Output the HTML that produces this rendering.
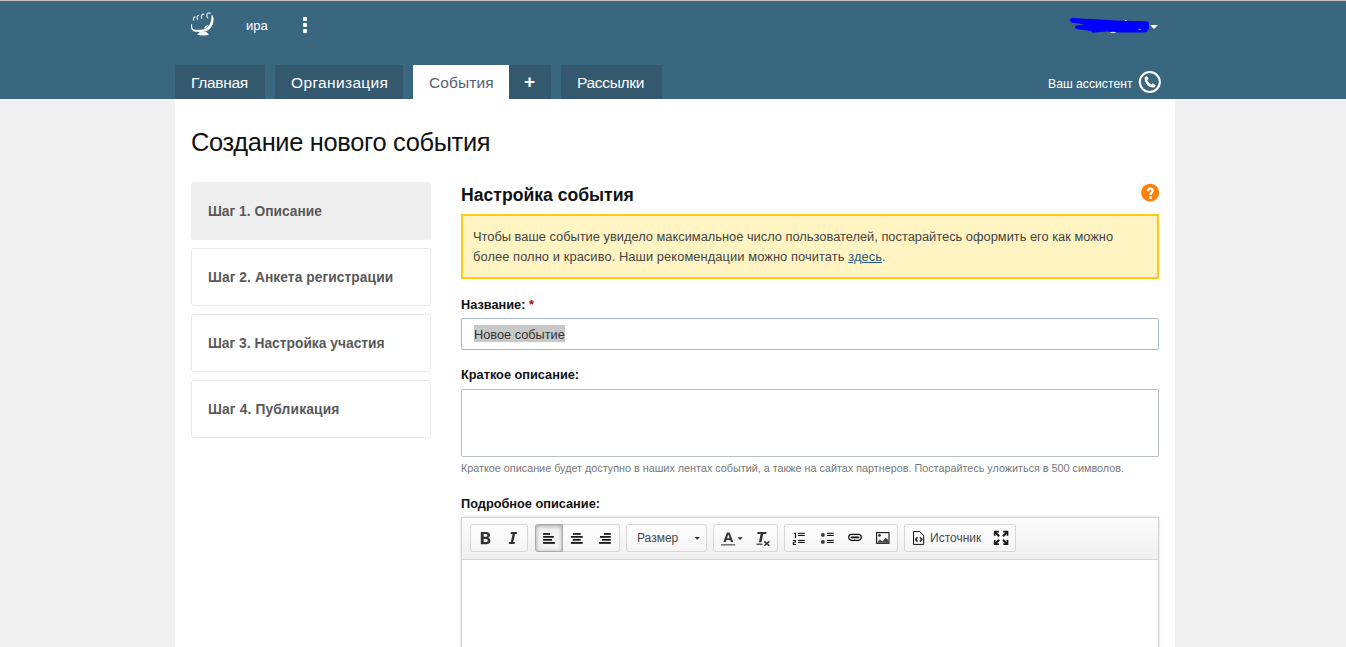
<!DOCTYPE html>
<html><head><meta charset="utf-8">
<style>
*{margin:0;padding:0;box-sizing:border-box}
html,body{width:1346px;height:647px;overflow:hidden;background:#f1f1f1;font-family:"Liberation Sans",sans-serif}
.a{position:absolute;white-space:nowrap}
#top{position:absolute;left:0;top:0;width:1346px;height:1px;background:#c9c0c0}
#hdr{position:absolute;left:0;top:1px;width:1346px;height:98px;background:#3a6780}
#wrap{position:absolute;left:175px;top:99px;width:1000px;height:548px;background:#fff}
.tab{position:absolute;top:65px;height:34px;background:#34596f;color:#fff;font-size:15.5px;letter-spacing:-0.3px}
.tab span{position:absolute;top:9px;line-height:17px}
.step{position:absolute;left:191px;width:240px;height:58px;border:1px solid #e8e8e8;border-radius:3px;background:#fff;color:#595959;font-weight:bold;font-size:13.8px}
.step span{position:absolute;left:16px;top:21px;line-height:16px}
.lbl{font-weight:bold;font-size:12.75px;color:#111;line-height:15px}
.grp{position:absolute;top:524px;height:28px;border:1px solid #d6d6d6;border-radius:3px;background:linear-gradient(#fff,#f4f4f4)}
</style></head><body>
<div id="top"></div>
<div id="hdr"></div>
<div id="wrap"></div>

<!-- logo -->
<svg class="a" style="left:188px;top:10px" width="28" height="28" viewBox="0 0 28 28">
<path d="M3,14.3 C2.7,17.5 3,20 6.5,21.6 C9,22.4 14,22.5 17.3,21.6 C20.5,20.6 23.8,17.5 25,13.5 C26,10 26,6.5 23.6,4.6 C23.6,7 23.5,9 22.9,11 C22.2,14 20.5,17 17.5,18.8 C14.5,20 9,20.2 5,19.3 C4.2,18 4.1,16 4.1,14.3 Z" fill="#fff"/>
<path d="M11.7,22.3 L18.2,22.1 C19.5,23.3 20.5,24 20.8,24.8 C17.5,25.6 12.5,25.6 9.1,24.8 C9.6,24 10.5,23.2 11.7,22.3 Z" fill="#fff"/>
<path d="M16,18.6 C16.5,16.6 18,15.3 20.2,15 C19.5,17 18.2,18.2 16,18.6 Z" fill="#fff"/>
<g fill="none" stroke="#fff" stroke-width="1.2" opacity=".85">
<path d="M7.4,7 C5.8,6.6 4.9,8.8 5.9,10.8"/>
<path d="M11,5.5 C9.3,5.2 8.5,7.6 9.5,9.7"/>
<path d="M16.3,4.3 C14,3.6 12.6,6.3 13.8,8.7"/>
<path d="M22.6,3.5 C20.8,1.8 17.9,3.6 18.9,6.5 C19.3,7.5 19.8,8 20.3,8"/>
</g>
</svg>
<div class="a" style="left:246px;top:17px;color:#fff;font-size:13px;line-height:17px">ира</div>
<div class="a" style="left:303px;top:17px;width:4px;height:4px;background:#fff;border-radius:1px"></div>
<div class="a" style="left:303px;top:23px;width:4px;height:4px;background:#fff;border-radius:1px"></div>
<div class="a" style="left:303px;top:29px;width:4px;height:4px;background:#fff;border-radius:1px"></div>

<!-- blue scribble -->
<svg class="a" style="left:0;top:0" width="1346" height="99" viewBox="0 0 1346 99">
<path d="M1070,20 Q1070,17.8 1073,17.8 L1080,18.6 L1101,19.4 L1116,20.5 L1147,21.3 Q1149.5,22 1149,24 L1149,28 Q1148,32.6 1143,32.6 L1118,32.6 L1107,31.5 L1095,32.5 Q1092,33.5 1091,31 L1076,29 Q1074,27 1076,25.5 L1085,24.5 L1074,23 Q1070,22.5 1070,20 Z" fill="#0000ff"/>
<path d="M1150,25 L1158,25 L1154,29 Z" fill="#fff"/>
<ellipse cx="1113" cy="32.4" rx="3" ry="0.7" fill="#fff" opacity=".8"/><ellipse cx="1125.8" cy="20.3" rx="1" ry="0.6" fill="#fff" opacity=".7"/><ellipse cx="1139.5" cy="29.4" rx="1.2" ry="0.6" fill="#fff" opacity=".7"/>
<circle cx="1149.8" cy="82" r="10" fill="none" stroke="#fff" stroke-width="2.1"/>
<path d="M1144.6,77.6 L1146.9,76 L1148.6,78.8 L1147.3,80.2 C1148,82 1149.6,83.6 1151.4,84.5 L1152.7,83.3 L1155.8,85.2 L1154.3,87.5 C1148.8,88.3 1144.2,83 1144.6,77.6 Z" fill="#fff"/>
</svg>

<!-- tabs -->
<div class="tab" style="left:175px;width:90px"><span style="left:16px">Главная</span></div>
<div class="tab" style="left:275px;width:128px"><span style="left:16px;letter-spacing:0.35px">Организация</span></div>
<div class="tab" style="left:413px;width:96px;background:#fff;color:#556270"><span style="left:16px;letter-spacing:0.1px">События</span></div>
<div class="tab" style="left:509px;width:42px"><span style="left:15px;font-weight:bold;font-size:19px;top:8px">+</span></div>
<div class="tab" style="left:561px;width:101px"><span style="left:16px">Рассылки</span></div>

<div class="a" style="left:1048px;top:77px;color:#fff;font-size:12.2px;line-height:15px">Ваш ассистент</div>

<div class="a" style="left:191px;top:128px;font-size:25.4px;letter-spacing:-0.31px;line-height:29px;color:#111">Создание нового события</div>

<div class="step" style="top:182px;background:#eee;border-color:#eee"><span>Шаг 1. Описание</span></div>
<div class="step" style="top:248px"><span style="letter-spacing:0.06px">Шаг 2. Анкета регистрации</span></div>
<div class="step" style="top:314px"><span>Шаг 3. Настройка участия</span></div>
<div class="step" style="top:380px"><span style="letter-spacing:0.14px">Шаг 4. Публикация</span></div>

<div class="a" style="left:461px;top:185px;font-size:17.6px;line-height:21px;font-weight:bold;color:#111">Настройка события</div>

<div class="a" style="left:461px;top:214px;width:698px;height:65px;background:#fff4c2;border:2px solid #fdcb17"></div>
<div class="a" style="left:473px;top:227px;font-size:12.85px;line-height:20px;color:#444">Чтобы ваше событие увидело максимальное число пользователей, постарайтесь оформить его как можно<br><span style="letter-spacing:0.09px">более полно и красиво. Наши рекомендации можно почитать <u style="color:#1f5a86">здесь</u>.</span></div>

<div class="a lbl" style="left:461px;top:297px">Название: <span style="color:#a00">*</span></div>
<div class="a" style="left:461px;top:318px;width:698px;height:32px;border:1px solid #abb7c0;border-radius:2px;background:#fff"></div>
<div class="a" style="left:474px;top:325px;height:17px;background:#c8c8c8;font-size:12.75px;color:#333;line-height:16px;padding-top:2px">Новое событие</div>

<div class="a lbl" style="left:461px;top:367px">Краткое описание:</div>
<div class="a" style="left:461px;top:389px;width:698px;height:68px;border:1px solid #b8bfc4;border-radius:2px;background:#fff"></div>
<div class="a" style="left:461px;top:462px;font-size:10.8px;color:#777;line-height:13px">Краткое описание будет доступно в наших лентах событий, а также на сайтах партнеров. Постарайтесь уложиться в 500 символов.</div>

<div class="a lbl" style="left:461px;top:496px">Подробное описание:</div>
<div class="a" style="left:461px;top:517px;width:698px;height:140px;border:1px solid #d1d1d1;background:#fff;box-shadow:0 0 3px rgba(0,0,0,.15)"></div>
<div class="a" style="left:462px;top:518px;width:696px;height:42px;background:linear-gradient(#fcfcfc,#efefef);border-bottom:1px solid #d6d6d6"></div>

<div class="grp" style="left:470px;width:58px"></div>
<div class="grp" style="left:535px;width:85px"></div>
<div class="a" style="left:535px;top:524px;width:28px;height:28px;border:1px solid #a9a9a9;border-radius:3px 0 0 3px;background:#f2f2f2;box-shadow:inset 0 1px 4px rgba(0,0,0,.35)"></div>
<div class="grp" style="left:626px;width:81px"></div>
<div class="grp" style="left:713px;width:65px"></div>
<div class="grp" style="left:784px;width:114px"></div>
<div class="grp" style="left:904px;width:112px"></div>
<div class="a" style="left:637px;top:531px;font-size:12px;line-height:14px;color:#474747">Размер</div>
<div class="a" style="left:930px;top:531px;font-size:12px;line-height:14px;color:#474747">Источник</div>
<svg class="a" style="left:460px;top:518px" width="560" height="42" viewBox="460 518 560 42">
<!-- B -->
<path fill="#333" fill-rule="evenodd" d="M480.8,531.9 H486.3 C489,531.9 490,533.3 490,534.9 C490,536.3 489.2,537.2 488.1,537.7 C489.6,538.1 490.4,539.2 490.4,540.8 C490.4,542.9 489,544.2 486.4,544.2 H480.8 Z M483.7,534.1 V536.8 H485.8 C486.8,536.8 487.3,536.3 487.3,535.4 C487.3,534.5 486.8,534.1 485.8,534.1 Z M483.7,538.9 V542 H486.1 C487.2,542 487.7,541.4 487.7,540.45 C487.7,539.5 487.2,538.9 486.1,538.9 Z"/>
<!-- I -->
<path fill="#333" d="M511,531.9 H517.2 L516.8,534 H515.1 L513.3,542.1 H514.9 L514.5,544.1 H508.8 L509.2,542.1 H510.8 L512.6,534 H510.6 Z"/>
<!-- align left -->
<g fill="#111">
<rect x="543.1" y="533.1" width="7" height="1.7"/>
<rect x="543.1" y="536.05" width="10.8" height="1.7"/>
<rect x="543.1" y="539" width="8.9" height="1.7"/>
<rect x="543.1" y="542" width="11.8" height="1.8"/>
<rect x="572.9" y="533.1" width="7.8" height="1.7"/>
<rect x="570.9" y="536.05" width="11.8" height="1.7"/>
<rect x="572.9" y="539" width="7.8" height="1.7"/>
<rect x="570.9" y="542" width="11.8" height="1.8"/>
<rect x="603.9" y="533.1" width="6.9" height="1.7"/>
<rect x="600" y="536.05" width="10.8" height="1.7"/>
<rect x="602" y="539" width="8.8" height="1.7"/>
<rect x="599" y="542" width="11.8" height="1.8"/>
</g>
<!-- size caret -->
<path d="M694.5,537 H699.8 L697.15,539.7 Z" fill="#333"/>
<!-- A -->
<path fill="#333" d="M726.9,532.5 H729.7 L733.2,542 H730.9 L730.2,539.9 H726.4 L725.7,542 H723.4 Z M727,538.2 H729.6 L728.3,534.3 Z" fill-rule="evenodd"/>
<rect x="721" y="544" width="14.2" height="1.6" fill="#777"/>
<path d="M737.5,537.3 H742.8 L740.15,540 Z" fill="#333"/>
<!-- Tx -->
<path fill="#333" d="M757.6,532 H766.6 L766.2,534.1 H763.2 L761.5,542.3 H758.9 L760.6,534.1 H757.2 Z"/>
<rect x="756.4" y="543.6" width="6" height="1.2" fill="#333"/>
<path d="M764.2,541.4 L769.4,545.8 M769.4,541.4 L764.2,545.8" stroke="#333" stroke-width="1.5"/>
<!-- numbered list -->
<g fill="#111">
<path d="M794.6,532.8 H796.1 V537.9 H794.9 V534 H794 Z"/>
<path d="M792.8,539.9 H796 V542.8 H794 V544 H796 V545.1 H792.8 V541.9 H794.8 V541 H792.8 Z"/>
<rect x="798" y="532.8" width="6.7" height="1.1"/>
<rect x="798" y="534.9" width="6.7" height="1.1"/>
<rect x="798" y="539.9" width="6.7" height="1.1"/>
<rect x="798" y="541.9" width="6.7" height="1.1"/>
<circle cx="822.9" cy="534.9" r="1.9" fill="#333"/>
<circle cx="822.9" cy="541.9" r="1.9" fill="#333"/>
<rect x="827" y="532.8" width="6.7" height="1.1"/>
<rect x="827" y="534.9" width="6.7" height="1.1"/>
<rect x="827" y="539.9" width="6.7" height="1.1"/>
<rect x="827" y="541.9" width="6.7" height="1.1"/>
</g>
<!-- link -->
<g fill="none" stroke="#111">
<rect x="848.7" y="534.4" width="12.6" height="5.9" rx="2.95" stroke-width="1.2"/>
</g>
<rect x="850.6" y="536.6" width="8.8" height="1.7" rx="0.85" fill="#111"/>
<path d="M853.4,533.9 H855.8 L854.6,535.4 Z M853.4,540.8 H855.8 L854.6,539.3 Z" fill="#111"/>
<!-- image -->
<rect x="876.6" y="532.6" width="12.4" height="10.7" fill="none" stroke="#111" stroke-width="1.1"/>
<circle cx="879.5" cy="535.4" r="1.3" fill="#333"/>
<path d="M877.2,542.8 L879.8,539.6 L882.5,541.4 L885.6,537.8 L888.6,540.2 V542.8 Z" fill="#444"/>
<!-- doc icon -->
<path d="M913.5,531.5 H919.6 L923.7,535.5 V544.4 H913.5 Z" fill="none" stroke="#111" stroke-width="1"/>
<path d="M917.6,537.2 L915.5,539.4 L917.6,541.6 M919.9,537.2 L922,539.4 L919.9,541.6" fill="none" stroke="#333" stroke-width="1.6"/>
<!-- maximize -->
<g fill="none" stroke="#1a1a1a">
<path d="M994.7,535.8 V531.7 H998.9 M1007.5,535.8 V531.7 H1003.3 M994.7,540.1 V544.2 H998.9 M1007.5,540.1 V544.2 H1003.3" stroke-width="1.7"/>
<path d="M995,532 L999.2,536.2 M1007.2,532 L1003,536.2 M995,543.9 L999.2,539.7 M1007.2,543.9 L1003,539.7" stroke-width="2.1"/>
</g>
</svg>

<!-- question icon -->
<svg class="a" style="left:1136px;top:180px" width="28" height="26" viewBox="1136 180 28 26"><circle cx="1150.15" cy="192.65" r="9" fill="#fd8108"/><path d="M1148,191.2 C1148,189.4 1149,188.6 1150.3,188.6 C1151.7,188.6 1152.6,189.4 1152.6,190.7 C1152.6,192.7 1150.4,192.6 1150.4,195" fill="none" stroke="#fff" stroke-width="2.4"/><rect x="1149.1" y="196.3" width="2.6" height="2.6" fill="#fff"/></svg>
</body></html>
